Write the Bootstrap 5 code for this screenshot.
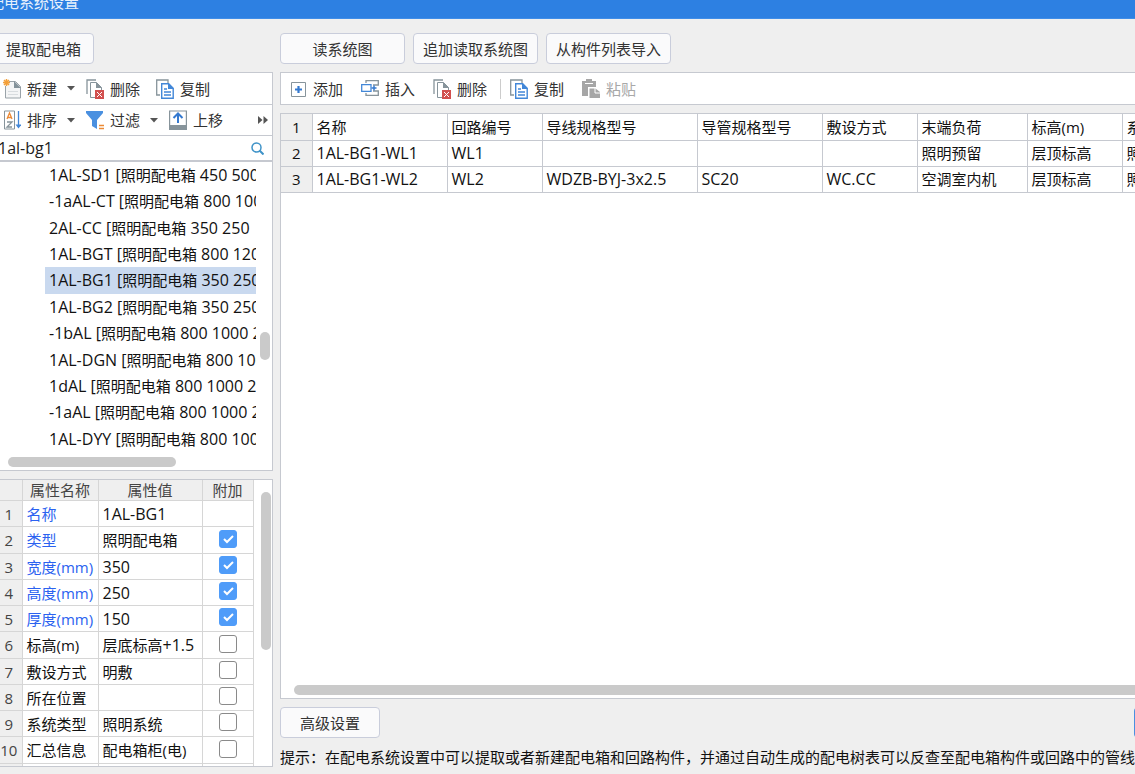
<!DOCTYPE html>
<html lang="zh-CN">
<head>
<meta charset="utf-8">
<meta name="viewport" content="width=device-width, initial-scale=1">
<title>配电系统设置</title>
<link href="https://cdn.jsdelivr.net/npm/bootstrap@5.3.0/dist/css/bootstrap.min.css" rel="stylesheet">
<style>
  body { background: #efefef; color: #1c1c1c; font: 15px/20px "Open Sans", "Noto Sans CJK SC", sans-serif; }
  .titlebar { background: #2d80e2; border-bottom: 1px solid #3f8de8; height: 19px; color: #e6f0fc; }
  .titlebar h1 { font-size: 15px; line-height: 20px; margin: -8px 0 0 -11px; font-weight: 400; }
  .side { width: 273px; padding-bottom: 7px; }
  .work { min-width: 0; margin-left: 7px; }
  .actions { padding-top: 14px; margin-bottom: 8px; }
  .pane { background: #fff; border: 1px solid #c6c9d0; }
  .side .pane { border-left: 0; }
  .push { background: #fafafb; border: 1px solid #c9cddb; border-radius: 4px; height: 31px; padding: 0; width: 125px; font-size: 15px; line-height: 20px; color: #333; }
  .push:hover { background: #fff; border-color: #9fb4dd; }
  .push-cut { width: 101px; margin-left: -7px; }
  .push-short { width: 100px; }
  .push-main { width: 100px; margin-right: -99px; background: #4a8fe0; border-color: #4a8fe0; color: #fff; }
  .bar { height: 33px; }
  .side .bar { height: 32px; }
  .tool { border: 0; border-radius: 4px; background: none; color: #333; height: 28px; padding: 0 8px; display: flex; align-items: center; gap: 6px; margin-right: 2px; white-space: nowrap; font-size: 15px; }
  .side .tool { padding: 0 7px; margin-right: 2px; }
  .side .tool:first-child { padding-left: 3px; }
  .side .tool.drop { padding-right: 2px; }
  .tool:hover { background: #f1f4fa; }
  .tool:disabled { color: #a8a8a8; background: none; }
  .tool svg { width: 18px; height: 20px; flex: none; }
  .tool .caret { width: 8px; height: 5px; margin-left: 4px; }
  .split { width: 1px; height: 20px; background: #ccc; margin: 0 1px 0 3px; }
  .search { height: 26px; border-bottom-width: 2px !important; }
  .search input { border: 0; outline: 0; padding: 0; min-width: 0; margin-left: -2px; color: #222; font-size: 16px; }
  .tree { height: 309px; }
  .tree-body { height: 290px; }
  .tree ul { width: 256px; padding-left: 45px; }
  .tree li { padding-left: 4px; white-space: pre; overflow: hidden; line-height: 26px; font-size: 16px; color: #111; }
  .tree li.on { background: #c9d9ef; }
  .han { font-size: 15px; }
  .latin { font-size: 16px; }
  .thumb { background: #cacaca; border-radius: 5px; }
  .vthumb { width: 10px; height: 28px; margin: 170px 0 0 4px; }
  .hthumb { width: 168px; height: 10px; margin: 5px 0 0 8px; }
  .props { flex: 1 1 0; min-height: 0; overflow: hidden; }
  table { border-collapse: collapse; table-layout: fixed; }
  th, td { font-weight: 400; padding: 0 4px; height: 26px; line-height: 20px; white-space: nowrap; overflow: hidden; }
  .ptab { width: 253px; flex: none; color: #111; }
  .ptab th, .ptab td { border-right: 1px solid #d6d6d6; border-bottom: 1px solid #d6d6d6; }
  .ptab thead th { height: 20px; background: #efefef; color: #444; text-align: center; padding: 0; }
  .ptab tbody th, .rtab th { background: #efefef; text-align: center; padding: 0; }
  .ptab tbody th { color: #444; padding-right: 4px; }
  .ptab tbody tr:nth-child(4n+2) td { height: 27px; }
  .ptab td.key { color: #2b62f0; }
  .ptab input { appearance: none; width: 18px; height: 18px; border: 1px solid #8a8a8a; border-radius: 3px; background: #fff; display: block; margin: -3px auto 0; }
  .ptab input:checked { border-color: #4f9cf9; background: #4f9cf9 url("data:image/svg+xml,%3Csvg xmlns='http://www.w3.org/2000/svg' viewBox='0 0 16 16'%3E%3Cpath d='M4 8l3 3 6-6' fill='none' stroke='%23fff' stroke-width='2'/%3E%3C/svg%3E"); }
  .pthumb { width: 10px; height: 158px; margin: 12px 0 0 7px; }
  .sheet { flex: 1 1 0; min-height: 0; overflow: hidden; }
  .rtab { width: 951px; color: #111; }
  .rtab th, .rtab td { border-right: 1px solid #c6c9d0; border-bottom: 1px solid #c6c9d0; }
  .rthumb { height: 10px; margin: 0 0 3px 13px; border-radius: 5px 0 0 5px; }
  .hint { line-height: 20px; color: #111; height: 20px; margin: 9px 0 7px; }
</style>
</head>
<body>
<div class="d-flex flex-column vh-100 overflow-hidden">
  <header class="titlebar overflow-hidden flex-shrink-0"><h1>配电系统设置</h1></header>
  <main class="d-flex flex-fill overflow-hidden">
    <aside class="side d-flex flex-column flex-shrink-0">
      <div class="actions"><button class="push push-cut" type="button">提取配电箱</button></div>
      <div class="pane bar d-flex align-items-center border-bottom-0">
        <button class="tool drop" type="button">
          <svg viewBox="0 0 18 20"><path d="M2.500 7v12h15V7.500l-5-5H6" fill="#f4f5f6" stroke="#9aa3a9"/><path d="M11 2l7 7h-7z" fill="#84929a"/><path d="M5 12.500h10M5 15.500h10" stroke="#d8dcdf"/><path d="M3.500 0v7M0 3.500h7M1 1l5 5M6 1L1 6" stroke="#f3a03a" stroke-width="1.500"/></svg>新建
          <svg class="caret" viewBox="0 0 8 5"><path d="M0 0h8L4 4.500z" fill="#555"/></svg></button>
        <button class="tool" type="button">
          <svg viewBox="0 0 18 20"><path d="M1 15V1h9" fill="none" stroke="#87949b" stroke-width="1.300"/><path d="M4.500 18.500v-15h6l5 5v10z" fill="#fff" stroke="#87949b"/><path d="M10 3l6 6h-6z" fill="#87949b"/><path d="M9 11h9v9H9z" fill="#d2504f"/><path d="M11 13l5 5M16 13l-5 5" stroke="#fff"/></svg>删除</button>
        <button class="tool" type="button">
          <svg viewBox="0 0 18 20"><path d="M4 16H.7V1H12v3" fill="none" stroke="#87949b" stroke-width="1.300"/><path d="M5.700 4.700h7l4.500 4.500v10H5.700z" fill="#fff" stroke="#4287d8" stroke-width="1.400"/><path d="M12 4l6 6h-6z" fill="#4287d8"/><path d="M8 10h3M8 13h7M8 16h7" stroke="#4287d8" stroke-width="1.400"/></svg>复制</button>
      </div>
      <div class="pane bar d-flex align-items-center">
        <button class="tool drop" type="button">
          <svg viewBox="0 0 18 20"><path d="M1.500 1h10v18h-10z" fill="#fff" stroke="#87949b"/><path d="M4 9l2.500-6L9 9M5 7.500h3" fill="none" stroke="#ec8a35" stroke-width="1.300"/><path d="M4 12h5l-5 5h5" fill="none" stroke="#87949b" stroke-width="1.300"/><path d="M15.500 1v15" stroke="#4287d8" stroke-width="1.300"/><path d="M12.500 14.500h6l-3 4z" fill="#4287d8"/></svg>排序
          <svg class="caret" viewBox="0 0 8 5"><path d="M0 0h8L4 4.500z" fill="#555"/></svg></button>
        <button class="tool drop" type="button">
          <svg viewBox="0 0 18 20"><path d="M0 1h17v2l-6 7v9l-5-3v-6L0 3z" fill="#4a90e0"/><path d="M13 15.500h5M13 18.500h5" stroke="#ec8a35" stroke-width="1.400"/></svg>过滤
          <svg class="caret" viewBox="0 0 8 5"><path d="M0 0h8L4 4.500z" fill="#555"/></svg></button>
        <button class="tool" type="button">
          <svg viewBox="0 0 18 20"><path d="M.6 1h16.800v18H.6z" fill="#fff" stroke="#87949b" stroke-width="1.200"/><path d="M0 15h18v5H0z" fill="#87949b"/><path d="M9 13V4M4.500 8L9 3.500 13.500 8" fill="none" stroke="#3479cf" stroke-width="2"/></svg>上移</button>
        <button class="border-0 bg-transparent p-0 ms-auto me-1 d-flex" type="button" aria-label="更多"><svg width="10" height="8" viewBox="0 0 10 8"><path d="M0 0l4.500 4L0 8zM5.500 0L10 4 5.500 8z" fill="#555"/></svg></button>
      </div>
      <div class="pane search d-flex align-items-center border-top-0">
        <input class="flex-fill" type="text" value="1al-bg1" aria-label="搜索">
        <svg class="me-2 flex-shrink-0" width="13" height="13" viewBox="0 0 13 13"><circle cx="5.500" cy="5.500" r="4.500" fill="none" stroke="#3f93c8" stroke-width="1.500"/><path d="M8.500 8.500L12.500 12.500" stroke="#3f93c8" stroke-width="2"/></svg>
      </div>
      <div class="pane tree border-top-0 flex-shrink-0">
        <div class="tree-body d-flex">
          <ul class="list-unstyled m-0 d-flex flex-column flex-shrink-0">
            <li class="flex-fill">1AL-SD1 [<span class="han">照明配电箱</span> 450 500 200]</li>
            <li class="flex-fill">-1aAL-CT [<span class="han">照明配电箱</span> 800 1000 200]</li>
            <li class="flex-fill">2AL-CC [<span class="han">照明配电箱</span> 350 250 </li>
            <li class="flex-fill">1AL-BGT [<span class="han">照明配电箱</span> 800 1200 200]</li>
            <li class="flex-fill on">1AL-BG1 [<span class="han">照明配电箱</span> 350 250 150]</li>
            <li class="flex-fill">1AL-BG2 [<span class="han">照明配电箱</span> 350 250 150]</li>
            <li class="flex-fill">-1bAL [<span class="han">照明配电箱</span> 800 1000 200]</li>
            <li class="flex-fill">1AL-DGN [<span class="han">照明配电箱</span> 800 1000 200]</li>
            <li class="flex-fill">1dAL [<span class="han">照明配电箱</span> 800 1000 200]</li>
            <li class="flex-fill">-1aAL [<span class="han">照明配电箱</span> 800 1000 200]</li>
            <li class="flex-fill">1AL-DYY [<span class="han">照明配电箱</span> 800 1000 200]</li>
          </ul>
          <div class="thumb vthumb"></div>
        </div>
        <div class="thumb hthumb"></div>
      </div>
      <div class="pane props d-flex align-items-start mt-2">
        <table class="ptab">
          <colgroup><col style="width:22px"><col style="width:76px"><col style="width:104px"><col style="width:51px"></colgroup>
          <thead><tr><th></th><th>属性名称</th><th>属性值</th><th>附加</th></tr></thead>
          <tbody>
            <tr><th>1</th><td class="key">名称</td><td class="latin">1AL-BG1</td><td></td></tr>
            <tr><th>2</th><td class="key">类型</td><td>照明配电箱</td><td><input type="checkbox" aria-label="类型" checked></td></tr>
            <tr><th>3</th><td class="key">宽度(mm)</td><td class="latin">350</td><td><input type="checkbox" aria-label="宽度" checked></td></tr>
            <tr><th>4</th><td class="key">高度(mm)</td><td class="latin">250</td><td><input type="checkbox" aria-label="高度" checked></td></tr>
            <tr><th>5</th><td class="key">厚度(mm)</td><td class="latin">150</td><td><input type="checkbox" aria-label="厚度" checked></td></tr>
            <tr><th>6</th><td>标高(m)</td><td>层底标高<span class="latin">+1.5</span></td><td><input type="checkbox" aria-label="标高"></td></tr>
            <tr><th>7</th><td>敷设方式</td><td>明敷</td><td><input type="checkbox" aria-label="敷设方式"></td></tr>
            <tr><th>8</th><td>所在位置</td><td></td><td><input type="checkbox" aria-label="所在位置"></td></tr>
            <tr><th>9</th><td>系统类型</td><td>照明系统</td><td><input type="checkbox" aria-label="系统类型"></td></tr>
            <tr><th>10</th><td>汇总信息</td><td>配电箱柜(电)</td><td><input type="checkbox" aria-label="汇总信息"></td></tr>
            <tr><th></th><td></td><td></td><td><input type="checkbox" aria-label="其他"></td></tr>
          </tbody>
        </table>
        <div class="thumb pthumb"></div>
      </div>
    </aside>
    <section class="work flex-fill d-flex flex-column overflow-hidden">
      <div class="actions d-flex gap-2 flex-shrink-0">
        <button class="push flex-shrink-0" type="button">读系统图</button>
        <button class="push flex-shrink-0" type="button">追加读取系统图</button>
        <button class="push flex-shrink-0" type="button">从构件列表导入</button>
      </div>
      <div class="pane bar d-flex align-items-center border-end-0 flex-shrink-0 mb-2">
        <button class="tool" type="button">
          <svg viewBox="0 0 18 20"><path d="M2.500 3.500h14v14h-14z" fill="#fff" stroke="#87949b"/><path d="M9.500 7v7M6 10.500h7" stroke="#3479cf" stroke-width="2.200"/></svg>添加</button>
        <button class="tool" type="button">
          <svg viewBox="0 0 18 20"><path d="M5 4V1.700h12.300V6H12M5 14v2.300h12.300V12H12" fill="none" stroke="#87949b" stroke-width="1.300"/><path d="M10 5.700H.7v6.600H10z" fill="#fff" stroke="#4287d8" stroke-width="1.300"/><path d="M13 6.500v5M10.500 9h5" stroke="#3479cf" stroke-width="1.500"/></svg>插入</button>
        <button class="tool" type="button">
          <svg viewBox="0 0 18 20"><path d="M1 15V1h9" fill="none" stroke="#87949b" stroke-width="1.300"/><path d="M4.500 18.500v-15h6l5 5v10z" fill="#fff" stroke="#87949b"/><path d="M10 3l6 6h-6z" fill="#87949b"/><path d="M9 11h9v9H9z" fill="#d2504f"/><path d="M11 13l5 5M16 13l-5 5" stroke="#fff"/></svg>删除</button>
        <span class="split"></span>
        <button class="tool" type="button">
          <svg viewBox="0 0 18 20"><path d="M4 16H.7V1H12v3" fill="none" stroke="#87949b" stroke-width="1.300"/><path d="M5.700 4.700h7l4.500 4.500v10H5.700z" fill="#fff" stroke="#4287d8" stroke-width="1.400"/><path d="M12 4l6 6h-6z" fill="#4287d8"/><path d="M8 10h3M8 13h7M8 16h7" stroke="#4287d8" stroke-width="1.400"/></svg>复制</button>
        <button class="tool" type="button" disabled>
          <svg viewBox="0 0 18 20"><path d="M0 2h4V0h6v2h4v6H6v9H0z" fill="#a6a6a6"/><path d="M3 4.500h8" stroke="#fff"/><path d="M7.500 9.500h6l5 4V19h-11z" fill="#a6a6a6"/><path d="M13 9v5h5" fill="none" stroke="#fff"/></svg>粘贴</button>
      </div>
      <div class="pane sheet border-end-0 d-flex flex-column">
        <div class="flex-fill overflow-hidden">
          <table class="rtab">
            <colgroup><col style="width:31px"><col style="width:135px"><col style="width:95px"><col style="width:155px"><col style="width:125px"><col style="width:95px"><col style="width:110px"><col style="width:95px"><col style="width:110px"></colgroup>
            <tbody>
              <tr><th>1</th><td>名称</td><td>回路编号</td><td>导线规格型号</td><td>导管规格型号</td><td>敷设方式</td><td>末端负荷</td><td>标高(m)</td><td>系统类型</td></tr>
              <tr><th>2</th><td class="latin">1AL-BG1-WL1</td><td class="latin">WL1</td><td></td><td></td><td></td><td>照明预留</td><td>层顶标高</td><td>照明系统</td></tr>
              <tr><th>3</th><td class="latin">1AL-BG1-WL2</td><td class="latin">WL2</td><td class="latin">WDZB-BYJ-3x2.5</td><td class="latin">SC20</td><td class="latin">WC.CC</td><td>空调室内机</td><td>层顶标高</td><td>照明系统</td></tr>
            </tbody>
          </table>
        </div>
        <div class="thumb rthumb flex-shrink-0"></div>
      </div>
      <div class="d-flex mt-2 flex-shrink-0 overflow-hidden">
        <button class="push push-short flex-shrink-0" type="button">高级设置</button>
        <button class="push push-main flex-shrink-0 ms-auto" type="button" aria-label="确定"></button>
      </div>
      <p class="hint text-nowrap overflow-hidden flex-shrink-0">提示：在配电系统设置中可以提取或者新建配电箱和回路构件，并通过自动生成的配电树表可以反查至配电箱构件或回路中的管线信息</p>
    </section>
  </main>
</div>
<script src="https://cdn.jsdelivr.net/npm/bootstrap@5.3.0/dist/js/bootstrap.bundle.min.js"></script>
</body>
</html>
